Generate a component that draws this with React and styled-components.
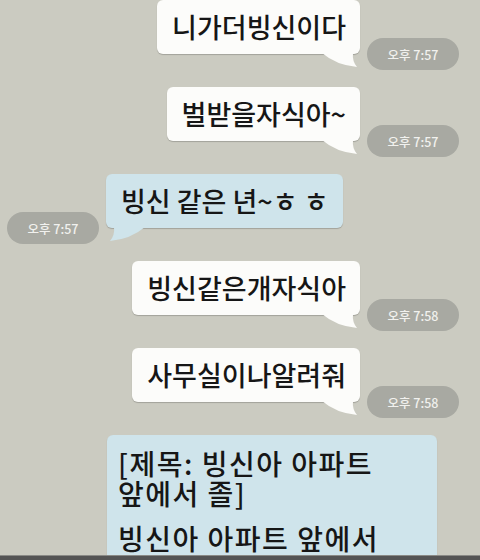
import { styled, createGlobalStyle } from 'styled-components'

const GlobalStyle = createGlobalStyle`
    html, body {
        margin: 0;
        padding: 0;
    }
    body {
        font-family: "Noto Sans CJK KR", "Noto Sans", sans-serif;
    }
`

const messages = [
    { id: 1, mine: true, text: '니가더빙신이다', time: '오후 7:57' },
    { id: 2, mine: true, text: '벌받을자식아~', time: '오후 7:57' },
    { id: 3, mine: false, text: '빙신 같은 년~ㅎ ㅎ', time: '오후 7:57' },
    { id: 4, mine: true, text: '빙신같은개자식아', time: '오후 7:58' },
    { id: 5, mine: true, text: '사무실이나알려줘', time: '오후 7:58' },
]

const Screen = styled.div`
    width: 480px;
    height: 560px;
    overflow: hidden;
    display: flex;
    flex-direction: column;
    background-color: #cbcbc1;
`

const ChatList = styled.div`
    flex: 1;
    display: flex;
    flex-direction: column;
    gap: 17px;
    overflow: hidden;
`

const Row = styled.div`
    display: flex;
    align-items: flex-end;
    gap: 7px;
    justify-content: ${p => (p.$mine ? 'flex-end' : 'flex-start')};
    padding: ${p => (p.$mine ? '0 21px 0 0' : `0 0 0 ${p.$indent || 7}px`)};
`

const Bubble = styled.div`
    position: relative;
    margin-bottom: 16px;
    padding: 9px 14px 9px 15px;
    border-radius: 6px;
    background-color: ${p => (p.$mine ? '#fcfcfa' : '#cfe4eb')};
    box-shadow: 0 1px 1px rgba(0, 0, 0, 0.2);
    font-size: 27px;
    font-weight: 500;
    line-height: 36px;
    color: #161616;
    white-space: nowrap;
`

const Tail = styled.svg`
    position: absolute;
    bottom: -14px;
    width: 36px;
    height: 15px;
    ${p => (p.$mine ? 'right: 2px;' : 'left: 3px; transform: scaleX(-1);')}
`

const TimePill = styled.div`
    width: 92px;
    height: 32px;
    flex: none;
    border-radius: 16px;
    background-color: #a8a9a2;
    color: #f1f1ee;
    font-size: 12.5px;
    font-weight: 500;
    display: flex;
    align-items: center;
    justify-content: center;
`

const LongBubble = styled(Bubble)`
    width: 330px;
    box-sizing: border-box;
    padding: 13px 11px 0 11px;
    font-size: 28px;
    letter-spacing: 1.5px;
    line-height: 30px;
    white-space: pre-line;
    margin-bottom: 0;
    border-radius: 6px 6px 0 0;
`

const Paragraph = styled.p`
    margin: 0 0 15px 0;
`

const BottomBar = styled.div`
    height: 4px;
    flex: none;
    background-color: #545454;
    border-top: 1px solid #8a8a86;
`

function BubbleTail({ mine }) {
    const fill = mine ? '#fcfcfa' : '#cfe4eb'
    return (
        <Tail $mine={mine} viewBox="0 0 36 15">
            <path d="M0 0 L31 0 Q30 8 35 14 Q14 12 0 0 Z" fill={fill} />
        </Tail>
    )
}

function Message({ mine, text, time }) {
    const bubble = (
        <Bubble $mine={mine}>
            {text}
            <BubbleTail mine={mine} />
        </Bubble>
    )
    const pill = <TimePill>{time}</TimePill>
    return (
        <Row $mine={mine}>
            {mine ? bubble : pill}
            {mine ? pill : bubble}
        </Row>
    )
}

export default function App() {
    return (
        <Screen>
            <GlobalStyle />
            <ChatList>
                {messages.map(m => (
                    <Message key={m.id} mine={m.mine} text={m.text} time={m.time} />
                ))}
                <Row $mine={false} $indent={107}>
                    <LongBubble $mine={false}>
                        <Paragraph>{'[제목: 빙신아 아파트\n앞에서 졸]'}</Paragraph>
                        <Paragraph>빙신아 아파트 앞에서</Paragraph>
                    </LongBubble>
                </Row>
            </ChatList>
            <BottomBar />
        </Screen>
    )
}
